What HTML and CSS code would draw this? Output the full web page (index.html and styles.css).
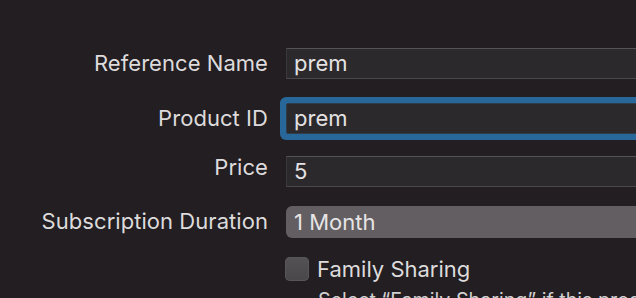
FILE: index.html
```html
<!DOCTYPE html>
<html lang="en">
<head>
<meta charset="UTF-8">
<meta name="viewport" content="width=device-width, initial-scale=1.0">
<title>Product</title>
<link rel="stylesheet" href="styles.css">
</head>
<body>
<div class="form">
  <div class="row row-name">
    <label class="label">Reference Name</label>
    <div class="field">prem</div>
  </div>
  <div class="row row-id">
    <label class="label">Product ID</label>
    <div class="field focused">prem</div>
  </div>
  <div class="row row-price">
    <label class="label label-price">Price</label>
    <div class="field">5</div>
  </div>
  <div class="row row-duration">
    <label class="label">Subscription Duration</label>
    <div class="popup">1 Month</div>
  </div>
  <div class="row row-family">
    <span class="label"></span>
    <div class="check-group">
      <div class="check-line">
        <span class="checkbox"></span>
        <span class="check-text">Family Sharing</span>
      </div>
      <p class="hint">Select “Family Sharing” if this product can be shared with family members.</p>
    </div>
  </div>
</div>
</body>
</html>
```

FILE: styles.css
```css
body {
  margin: 0;
  background-color: #221e21;
  color: #dddbdc;
  font-family: Inter, "Noto Sans", sans-serif;
  font-size: 22px;
  overflow: hidden;
}
.form {
  padding-top: 48px;
  display: flex;
  flex-direction: column;
}
.row {
  display: flex;
  align-items: center;
  gap: 18px;
}
.row-id { margin-top: 24px; }
.row-price { margin-top: 22px; }
.row-duration { margin-top: 19px; }
.row-family { margin-top: 18px; align-items: flex-start; }
.label {
  flex: 0 0 268px;
  text-align: right;
  line-height: 20px;
  padding-bottom: 2px;
  letter-spacing: 0.05px;
}
.label-price {
  padding-bottom: 10px;
}
.field {
  flex: 0 0 420px;
  height: 31px;
  box-sizing: border-box;
  padding: 0 7px;
  background-color: #2b292c;
  border: 1px solid #3a383b;
  border-top-color: #555356;
  border-bottom-color: #4a484b;
  font-size: 22px;
  line-height: 29px;
  color: #e4e2e3;
}
.field.focused {
  border-color: #2f3d4a;
  box-shadow: 0 0 0 6px #28679a;
  border-radius: 2px;
}
.popup {
  flex: 0 0 420px;
  height: 32px;
  box-sizing: border-box;
  padding: 0 8px;
  background-color: #625e61;
  border-radius: 6px;
  font-size: 22px;
  line-height: 32px;
  color: #e6e4e5;
}
.check-group {
  margin-left: -1px;
}
.check-line {
  display: flex;
  align-items: center;
  gap: 8px;
}
.checkbox {
  width: 24px;
  height: 24px;
  border-radius: 5px;
  background: linear-gradient(#555256, #4a474a);
  box-shadow: inset 0 0 0 1px #58555a;
}
.check-text {
  font-size: 22px;
}
.hint {
  margin: 6px 0 0 33px;
  white-space: nowrap;
  font-size: 19.7px;
  color: #d2d0d1;
}
```
